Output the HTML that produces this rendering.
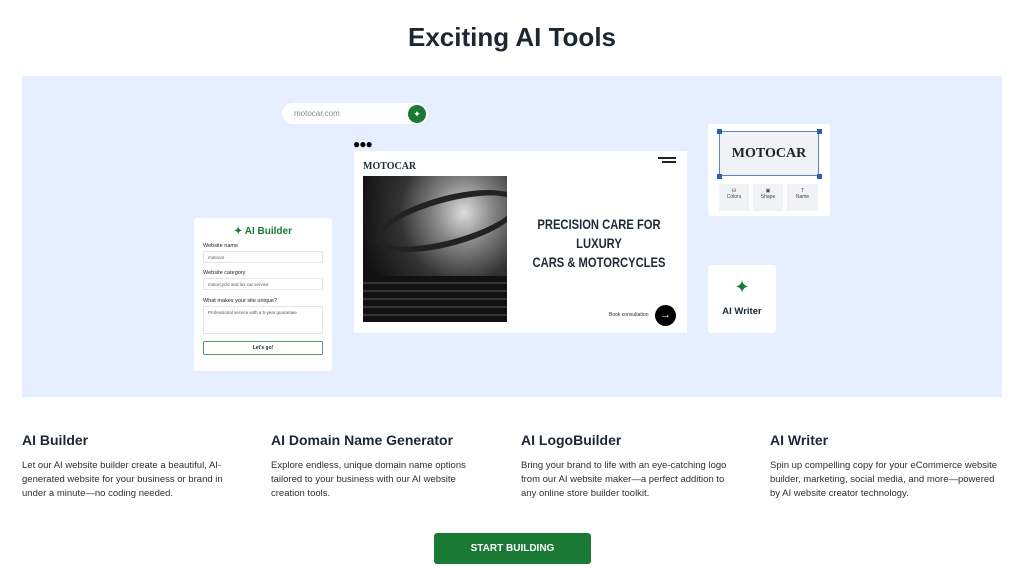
<!DOCTYPE html>
<html><head><meta charset="utf-8"><style>
*{margin:0;padding:0;box-sizing:border-box}
body{width:1024px;height:568px;background:#fff;font-family:"Liberation Sans",sans-serif;color:#1f2a36;position:relative;overflow:hidden}
.abs{position:absolute}
h1{position:absolute;top:22px;left:0;width:1024px;text-align:center;font-size:26px;font-weight:bold;color:#1d2733}
.panel{left:22px;top:76px;width:980px;height:321px;background:#e6efff}
.card{background:#fff;border-radius:3px}
.col{position:absolute;top:432px;width:212px}
.col h3{font-size:14px;font-weight:bold;margin-bottom:11px;color:#1d2733}
.col p{font-size:9.5px;line-height:14px;color:#2a2f36}
.lbl{font-size:5.5px;color:#222;position:absolute;left:9px}
.inp{position:absolute;left:9px;width:120px;border:1px solid #e3e6ea;font-size:4.5px;color:#555;padding:3px 4px}
.btn{left:434px;top:533px;width:157px;height:31px;background:#1a7a35;border-radius:3px;color:#fff;font-size:10px;font-weight:bold;text-align:center;line-height:32px}
.cond{font-family:"Liberation Sans Narrow","Liberation Sans",sans-serif;font-weight:bold;font-size:13px;text-align:center;line-height:19px;white-space:nowrap;transform:scaleX(.8)}
</style></head><body>
<h1>Exciting AI Tools</h1>
<div class="abs panel"></div>
<div class="abs" style="left:282px;top:103px;width:146px;height:21px;background:#fff;border-radius:11px;font-size:8px;color:#888;padding:6px 0 0 12px">motocar.com</div>
<div class="abs" style="left:408px;top:105px;width:18px;height:18px;border-radius:50%;background:#1a7a35;color:#fff;font-size:9px;text-align:center;line-height:18px">✦</div>
<div class="abs" style="left:353px;top:137px;font-size:12px;letter-spacing:-1px;color:#000">●●●</div>
<div class="abs card" style="left:354px;top:151px;width:333px;height:182px;border-radius:0">
 <div class="abs" style="left:9px;top:10px;font-family:'Liberation Serif',serif;font-weight:bold;font-size:10px">MOTOCAR</div>
 <div class="abs" style="left:304px;top:6px;width:18px;height:2px;background:#222"></div>
 <div class="abs" style="left:308px;top:10px;width:14px;height:2px;background:#222"></div>
 <div class="abs" style="left:9px;top:25px;width:144px;height:146px;background:radial-gradient(ellipse at 70% 25%,#ddd 0,#888 20%,#333 45%,#111 75%);overflow:hidden">
  <div class="abs" style="left:10px;top:20px;width:150px;height:50px;border:6px solid #222;border-radius:50%;transform:rotate(-15deg)"></div>
  <div class="abs" style="left:0;top:100px;width:144px;height:46px;background:repeating-linear-gradient(#111 0 6px,#333 6px 8px)"></div>
 </div>
 <div class="abs cond" style="left:150px;top:64px;width:190px;font-size:14px">PRECISION CARE FOR<br>LUXURY<br>CARS &amp; MOTORCYCLES</div>
 <div class="abs" style="left:255px;top:161px;font-size:5px">Book consultation</div>
 <div class="abs" style="left:301px;top:154px;width:21px;height:21px;border-radius:50%;background:#000;color:#fff;font-size:11px;text-align:center;line-height:20px">→</div>
</div>
<div class="abs card" style="left:194px;top:218px;width:138px;height:153px">
 <div class="abs" style="left:0;top:8px;width:138px;text-align:center;font-size:10px;font-weight:bold;color:#1a7a35">✦ AI Builder</div>
 <div class="lbl" style="top:25px">Website name</div>
 <div class="inp" style="top:33px;height:12px">motocar</div>
 <div class="lbl" style="top:52px">Website category</div>
 <div class="inp" style="top:60px;height:12px">motorcycle and lux car service</div>
 <div class="lbl" style="top:80px">What makes your site unique?</div>
 <div class="inp" style="top:88px;height:28px">Professional service with a 5-year guarantee</div>
 <div class="abs" style="left:9px;top:123px;width:120px;height:14px;border:1px solid #5a9a6a;border-radius:2px;font-size:5px;text-align:center;line-height:12px;font-weight:bold">Let's go!</div>
</div>
<div class="abs card" style="left:708px;top:124px;width:122px;height:92px">
 <div class="abs" style="left:11px;top:7px;width:100px;height:45px;background:#f1f2f6;border:1px solid #5b84c4;font-family:'Liberation Serif',serif;font-weight:bold;font-size:14px;text-align:center;line-height:43px;color:#222">MOTOCAR</div>
 <div class="abs" style="left:9px;top:5px;width:5px;height:5px;background:#2a5fb8"></div>
 <div class="abs" style="left:109px;top:5px;width:5px;height:5px;background:#2a5fb8"></div>
 <div class="abs" style="left:9px;top:50px;width:5px;height:5px;background:#2a5fb8"></div>
 <div class="abs" style="left:109px;top:50px;width:5px;height:5px;background:#2a5fb8"></div>
 <div class="abs" style="left:11px;top:60px;width:30px;height:27px;background:#f1f2f5;font-size:5px;text-align:center;padding-top:4px;color:#444">⛁<br>Colors</div>
 <div class="abs" style="left:45px;top:60px;width:30px;height:27px;background:#f1f2f5;font-size:5px;text-align:center;padding-top:4px;color:#444">▣<br>Shape</div>
 <div class="abs" style="left:79px;top:60px;width:31px;height:27px;background:#f1f2f5;font-size:5px;text-align:center;padding-top:4px;color:#444">T<br>Name</div>
</div>
<div class="abs card" style="left:708px;top:265px;width:68px;height:68px">
 <div class="abs" style="left:0;top:12px;width:68px;text-align:center;font-size:18px;color:#1a7a35">✦</div>
 <div class="abs" style="left:0;top:41px;width:68px;text-align:center;font-size:9.5px;font-weight:bold">AI Writer</div>
</div>
<div class="col" style="left:22px"><h3>AI Builder</h3><p>Let our AI website builder create a beautiful, AI-generated website for your business or brand in under a minute—no coding needed.</p></div>
<div class="col" style="left:271px"><h3>AI Domain Name Generator</h3><p>Explore endless, unique domain name options tailored to your business with our AI website creation tools.</p></div>
<div class="col" style="left:521px"><h3>AI LogoBuilder</h3><p>Bring your brand to life with an eye-catching logo from our AI website maker—a perfect addition to any online store builder toolkit.</p></div>
<div class="col" style="left:770px;width:236px"><h3>AI Writer</h3><p>Spin up compelling copy for your eCommerce website builder, marketing, social media, and more—powered by AI website creator technology.</p></div>
<div class="abs btn">START BUILDING</div>
</body></html>
